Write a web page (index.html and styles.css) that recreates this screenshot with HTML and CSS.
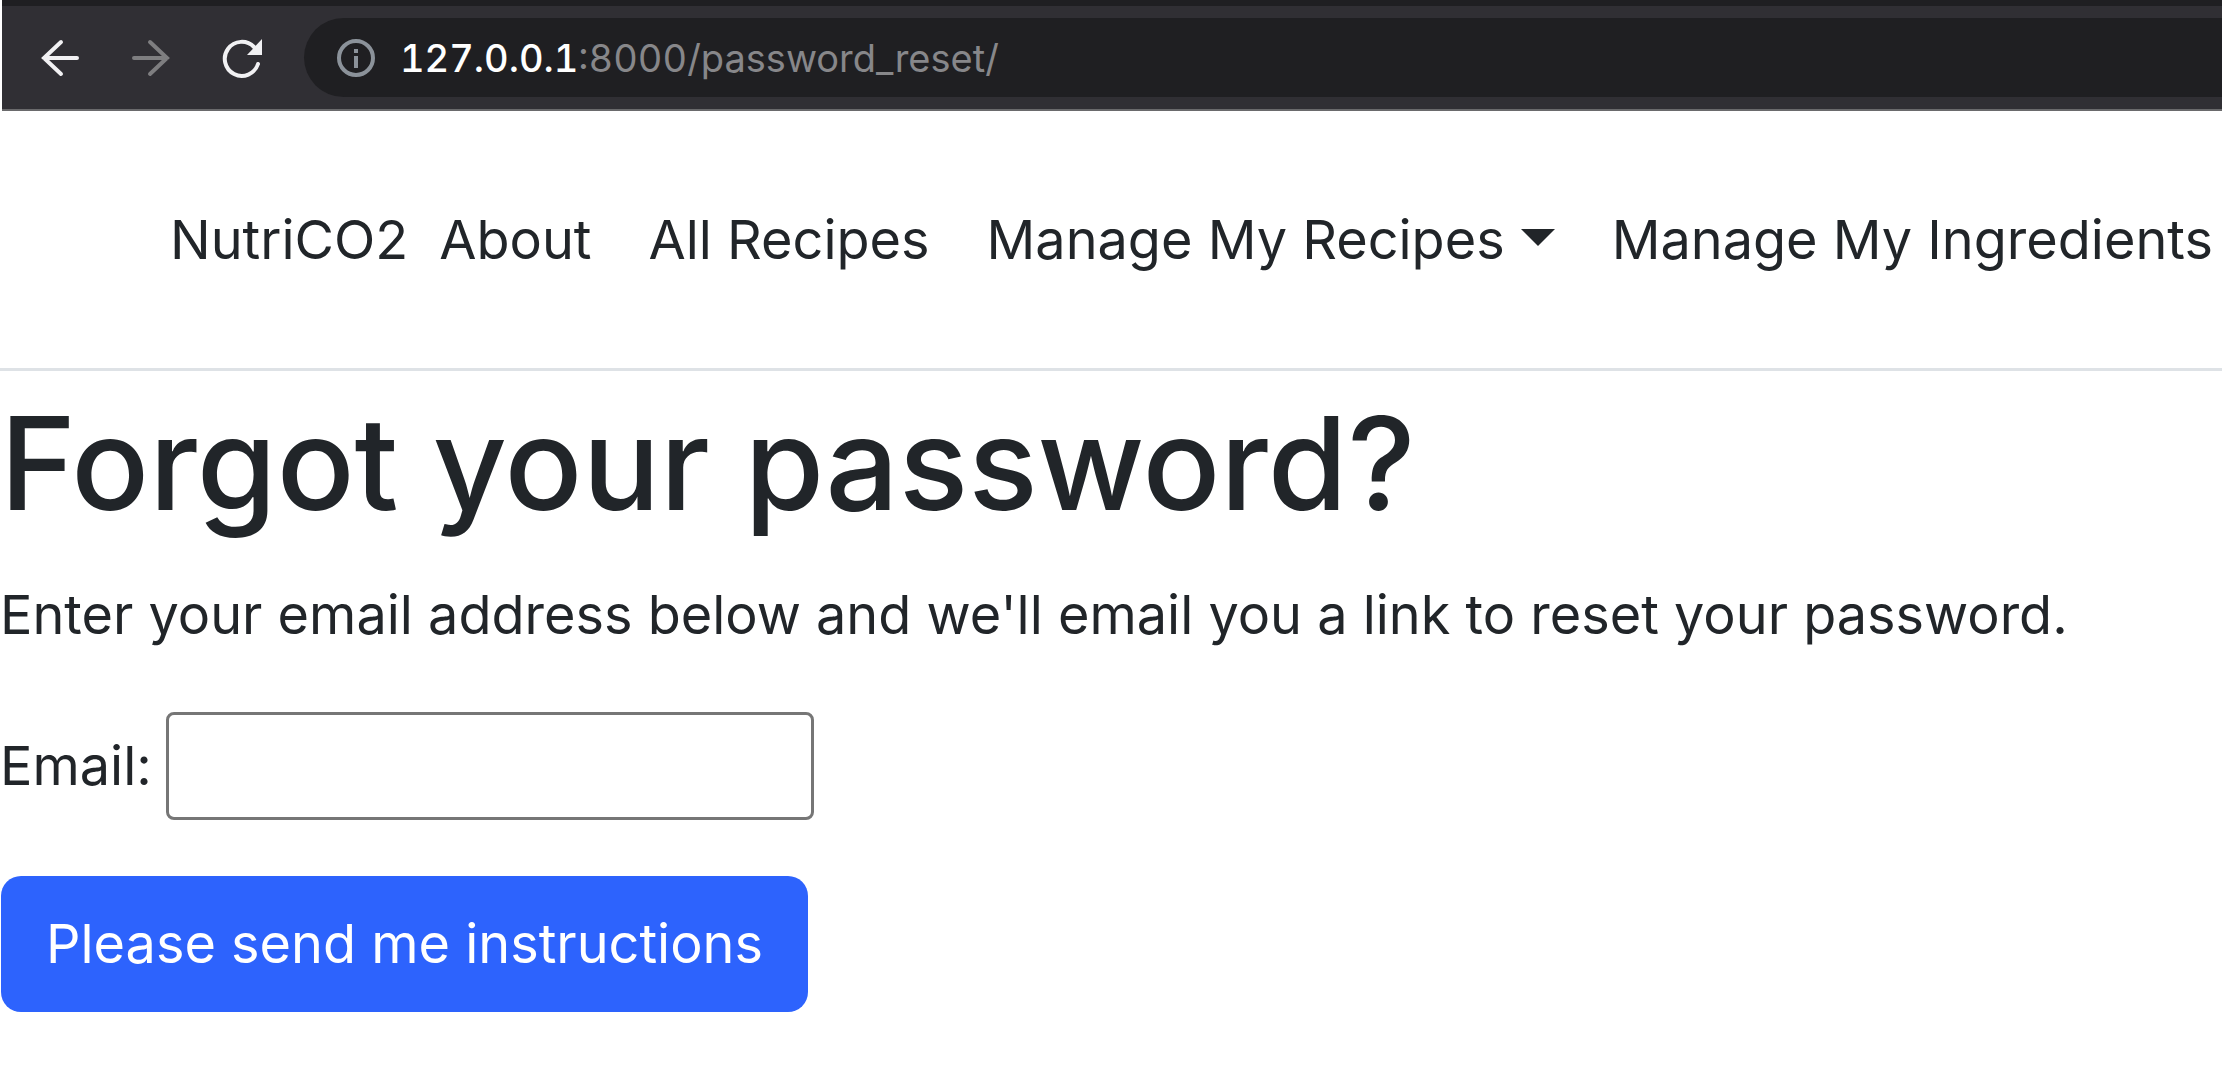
FILE: index.html
```html
<!DOCTYPE html>
<html lang="en">
<head>
<meta charset="utf-8">
<title>Forgot your password?</title>
<link rel="stylesheet" href="styles.css">
</head>
<body>
<div class="toolbar">
  <div class="tools">
    <button class="tool" type="button" aria-label="Back">
      <svg viewBox="0 0 40 40"><path d="M37 20H4M21 4L4 20l17 16"/></svg>
    </button>
    <button class="tool tool-off" type="button" aria-label="Forward" disabled>
      <svg viewBox="0 0 40 40"><path d="M3 20h33M19 4l17 16-17 16"/></svg>
    </button>
    <button class="tool" type="button" aria-label="Reload">
      <svg viewBox="0 0 40 40"><path d="M36 26A17 17 0 1 1 32 9"/><path class="solid" d="M40 1v16H25z"/></svg>
    </button>
  </div>
  <div class="omnibox">
    <svg class="info" viewBox="0 0 40 40"><circle cx="20" cy="20" r="17"/><path d="M20 11v4M20 18v12"/></svg>
    <span class="url"><span class="host">127.0.0.1</span>:8000/password_reset/</span>
  </div>
</div>
<nav class="navbar">
  <a class="brand" href="#">NutriCO2</a>
  <a class="link" href="#">About</a>
  <a class="link" href="#">All Recipes</a>
  <a class="link drop" href="#">Manage My Recipes</a>
  <a class="link drop" href="#">Manage My Ingredients</a>
</nav>
<main class="content">
  <h1 class="title">Forgot your password?</h1>
  <p class="lead">Enter your email address below and we'll email you a link to reset your password.</p>
  <form class="form">
    <div class="field">
      <label for="email">Email:</label>
      <input class="input" id="email" type="email">
    </div>
    <button class="submit" type="submit">Please send me instructions</button>
  </form>
</main>
</body>
</html>
```
FILE: styles.css
```css
* { box-sizing: border-box; }
body {
  margin: 0;
  background: #fff;
  color: #212529;
  font: 400 54px/84px Inter, "Liberation Sans", sans-serif;
}
.toolbar {
  display: flex;
  align-items: center;
  gap: 42px;
  margin-left: 2px;
  padding: 12px 0 12px 38px;
  border-top: 6px solid #1f1f22;
  border-bottom: 2px solid #6a6a6c;
  background: #302f34;
}
.tools { display: flex; gap: 51px; }
.tool {
  flex: none;
  width: 40px;
  height: 40px;
  padding: 0;
  border: 0;
  background: none;
  color: #f1f1f3;
}
.tool svg, .info {
  display: block;
  width: 40px;
  height: 40px;
  fill: none;
  stroke: currentColor;
  stroke-width: 4;
  stroke-linecap: round;
}
.tool .solid { fill: currentColor; stroke: none; }
.tool-off { color: #7e7e80; }
.omnibox {
  flex: 1;
  display: flex;
  align-items: center;
  gap: 24px;
  height: 79px;
  padding-left: 32px;
  border-radius: 40px 0 0 40px;
  background: #1f1f22;
  color: #87878a;
}
.info { flex: none; color: #8b929a; }
.omnibox .info { stroke-linecap: butt; }
.url {
  font-size: 38px;
  line-height: 48px;
  font-variant-numeric: tabular-nums;
  white-space: nowrap;
}
.host { color: #fff; font-weight: 500; }
.navbar {
  display: flex;
  align-items: center;
  gap: 57px;
  padding: 87px 0 86px 170px;
  border-bottom: 3px solid #dee2e6;
  overflow: hidden;
  white-space: nowrap;
}
.navbar a { color: inherit; text-decoration: none; }
.brand { margin-right: -26px; }
.drop { display: flex; align-items: center; gap: 16px; }
.drop::after {
  content: "";
  margin-bottom: 6px;
  border: 17px solid transparent;
  border-top-color: currentColor;
  border-bottom: 0;
}
.title { margin: 6px 0 24px; font-size: 129px; line-height: 172px; font-weight: 500; }
.lead { margin: 0 0 55px; }
.form { display: flex; flex-direction: column; align-items: flex-start; gap: 56px; }
.field { display: flex; align-items: center; gap: 14px; }
.input {
  width: 648px;
  height: 108px;
  padding: 4px 8px;
  border: 3px solid #767676;
  border-radius: 8px;
  background: #fff;
  font: inherit;
}
.submit {
  margin-left: 1px;
  padding: 26px 45px;
  border: 0;
  border-radius: 20px;
  background: #2d63fd;
  color: #fff;
  font: inherit;
}
```
